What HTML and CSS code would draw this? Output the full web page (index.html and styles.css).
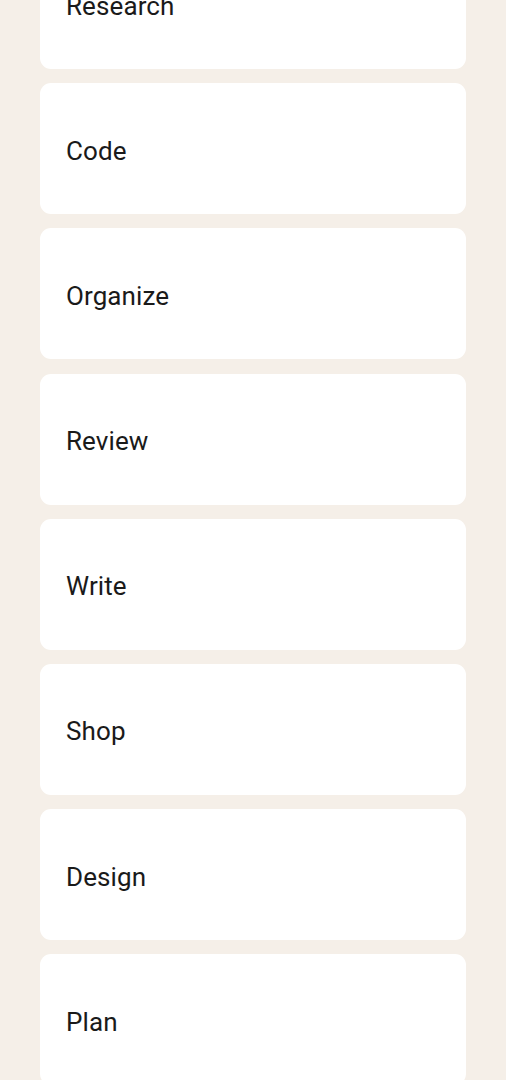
FILE: index.html
```html
<!DOCTYPE html>
<html>
<head>
<meta charset="utf-8">
<link rel="stylesheet" href="styles.css">
</head>
<body>
<div class="list">
  <div class="card"><span class="label">Research</span></div>
  <div class="card"><span class="label">Code</span></div>
  <div class="card"><span class="label">Organize</span></div>
  <div class="card"><span class="label">Review</span></div>
  <div class="card"><span class="label">Write</span></div>
  <div class="card"><span class="label">Shop</span></div>
  <div class="card"><span class="label">Design</span></div>
  <div class="card"><span class="label">Plan</span></div>
</div>
</body>
</html>
```
FILE: styles.css
```css
html, body {
  margin: 0;
  padding: 0;
  background: #f5efe8;
  overflow: hidden;
}
body {
  width: 506px;
  height: 1080px;
  font-family: Roboto, "Noto Sans", sans-serif;
}
.list {
  display: flex;
  flex-direction: column;
  gap: 14.2px;
  padding: 0 40px;
  margin-top: -62px;
}
.card {
  background: #ffffff;
  border-radius: 11px;
  height: 131px;
  display: flex;
  align-items: center;
  padding: 0 26px;
  box-sizing: border-box;
}
.label {
  font-size: 26px;
  color: #1a1a1a;
  line-height: 1;
  margin-top: 4px;
  letter-spacing: 0.1px;
}
```
